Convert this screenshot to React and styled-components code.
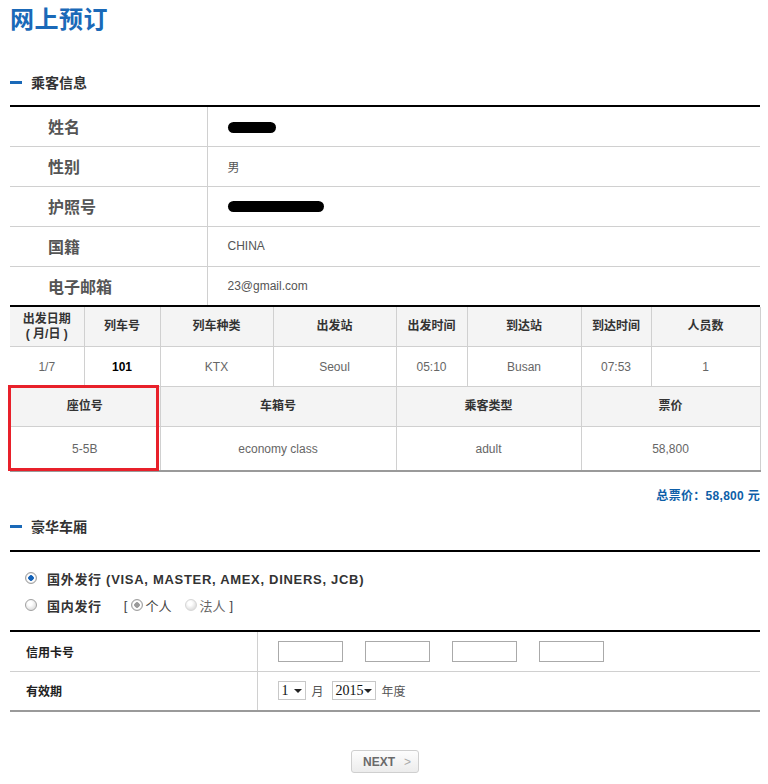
import React from 'react'
import styled, { createGlobalStyle } from 'styled-components'

const GlobalStyle = createGlobalStyle`
  body {
    margin: 0;
    background: #fff;
    font-family: "Liberation Sans", "Noto Sans CJK SC", sans-serif;
    color: #555;
  }
`

const Page = styled.div`
  width: 750px;
  padding: 0 8px 12px 10px;
`

const Title = styled.h1`
  margin: 0;
  padding-top: 4px;
  height: 32px;
  font-size: 24px;
  line-height: 32px;
  font-weight: 700;
  color: #1a69b8;
  letter-spacing: 0.5px;
`

const SectionHead = styled.h2`
  display: flex;
  align-items: center;
  gap: 9px;
  margin: 0;
  height: ${({ h }) => h}px;
  padding-top: ${({ top }) => top}px;
  padding-bottom: ${({ bottom }) => bottom}px;
  box-sizing: content-box;
  font-size: 14px;
  font-weight: 700;
  color: #333;

  &::before {
    content: '';
    width: 12px;
    height: 3px;
    background: #1a69b8;
  }
`

const InfoTable = styled.table`
  width: 750px;
  border-collapse: collapse;
  table-layout: fixed;
  border-top: 2px solid #000;
  border-bottom: 2px solid #000;
`

const InfoRow = styled.tr`
  height: 40px;
  & + & {
    border-top: 1px solid #d0d0d0;
  }
`

const InfoLabel = styled.th`
  padding: 0 0 0 38px;
  text-align: left;
  font-size: 16px;
  font-weight: 700;
  color: #555;
  border-right: 1px solid #d0d0d0;
`

const InfoValue = styled.td`
  padding: 0 0 0 20px;
  font-size: 12px;
  color: #555;
`

const Blot = styled.span`
  display: inline-block;
  vertical-align: middle;
  width: ${({ w }) => w}px;
  height: 11px;
  background: #000;
  border-radius: 6px;
`

const Grid = styled.table`
  width: 750px;
  border-collapse: collapse;
  table-layout: fixed;
  border-bottom: ${({ last }) => (last ? '2px solid #9a9a9a' : 'none')};
`

const HeadCell = styled.th`
  height: 39px;
  padding: 0;
  background: #f4f4f4;
  font-size: 12px;
  line-height: 15px;
  font-weight: 700;
  color: #333;
  text-align: center;
  border: 1px solid #d0d0d0;
  border-top: ${({ ruled }) => (ruled ? '1px solid #d0d0d0' : 'none')};
  &:first-child { border-left: none; }
`

const DataCell = styled.td`
  height: ${({ h }) => h || 39}px;
  padding: 0;
  font-size: 12px;
  color: ${({ strong }) => (strong ? '#000' : '#666')};
  font-weight: ${({ strong }) => (strong ? 700 : 400)};
  text-align: center;
  border: 1px solid #d0d0d0;
  border-bottom: none;
  &:first-child { border-left: none; }
`

const SeatWrap = styled.div`
  position: relative;
`

const Highlight = styled.div`
  position: absolute;
  left: -2px;
  top: -1px;
  width: 145px;
  height: 80px;
  border: 3px solid #e8202a;
  pointer-events: none;
`

const Total = styled.div`
  margin-top: 17px;
  text-align: right;
  font-size: 12px;
  line-height: 14px;
  font-weight: 700;
  color: #0e5fa8;
  letter-spacing: 0.3px;
`

const Rule = styled.div`
  height: 2px;
  background: #000;
`

const Options = styled.div`
  display: flex;
  flex-direction: column;
  gap: 11px;
  padding: 18px 0 17px 15px;
`

const OptionRow = styled.div`
  display: flex;
  align-items: center;
  height: 16px;
  font-size: 13px;
  color: #333;
`

const Radio = styled.span`
  display: inline-block;
  box-sizing: border-box;
  width: 12px;
  height: 12px;
  border-radius: 50%;
  border: 1px solid ${({ faint }) => (faint ? '#d6d6d6' : '#a0a0a0')};
  background: ${({ checked, tone }) =>
    checked
      ? `radial-gradient(circle, ${tone === 'gray' ? '#9a9a9a' : '#1261b8'} 0 2.5px, #fff 3px 4px, #d8d8d8 5px)`
      : 'radial-gradient(circle at 40% 35%, #fff 0 2px, #e2e2e2 6px)'};
  margin-right: ${({ mr }) => mr}px;
  flex: none;
`

const OptLabel = styled.span`
  font-weight: 700;
  letter-spacing: 0.7px;
`

const SubGroup = styled.span`
  display: flex;
  align-items: center;
  margin-left: 22px;
  font-size: 13px;
  color: #444;
`

const Sub = styled.span`
  display: flex;
  align-items: center;
  margin-left: ${({ ml }) => ml}px;
  color: ${({ faint }) => (faint ? '#666' : '#444')};
`

const FormTable = styled.table`
  width: 750px;
  border-collapse: collapse;
  table-layout: fixed;
  border-top: 2px solid #000;
  border-bottom: 2px solid #9a9a9a;
`

const FormRow = styled.tr`
  height: 40px;
  & + & {
    border-top: 1px solid #d0d0d0;
  }
`

const FormLabel = styled.th`
  padding: 0 0 0 16px;
  text-align: left;
  font-size: 12px;
  font-weight: 700;
  color: #222;
  border-right: 1px solid #d0d0d0;
`

const FormValue = styled.td`
  padding: 0 0 0 20px;
`

const Inline = styled.div`
  display: flex;
  align-items: center;
  gap: ${({ gap }) => gap}px;
`

const CardInput = styled.input`
  box-sizing: border-box;
  width: 65px;
  height: 21px;
  border: 1px solid #aaa;
  padding: 0 3px;
  margin: 0;
`

const Select = styled.div`
  display: flex;
  align-items: center;
  justify-content: space-between;
  box-sizing: border-box;
  width: ${({ w }) => w}px;
  height: 19px;
  padding: 0 3px 0 3px;
  border: 1px solid #c8c8c8;
  font-family: "Liberation Serif", serif;
  font-size: 14px;
  color: #111;

  &::after {
    content: '';
    border-left: 4px solid transparent;
    border-right: 4px solid transparent;
    border-top: 4px solid #222;
  }
`

const Unit = styled.span`
  font-size: 12px;
  color: #555;
  margin: 0 8px 0 6px;
`

const Actions = styled.div`
  display: flex;
  justify-content: center;
  padding: 38px 0 0 0;
`

const NextButton = styled.button`
  display: flex;
  align-items: center;
  justify-content: center;
  gap: 9px;
  box-sizing: border-box;
  width: 68px;
  height: 23px;
  padding: 0 0 0 4px;
  border: 1px solid #cfcfcf;
  border-radius: 3px;
  background: linear-gradient(#fdfdfd, #ececec);
  font-family: "Liberation Sans", sans-serif;
  font-size: 12px;
  font-weight: 700;
  color: #6a6a6a;
  cursor: pointer;

  span {
    font-weight: 400;
    color: #aaa;
  }
`

const passenger = [
  ['姓名', <Blot w={48} />],
  ['性别', '男'],
  ['护照号', <Blot w={96} />],
  ['国籍', 'CHINA'],
  ['电子邮箱', '23@gmail.com'],
]

const trainCols = [74, 76, 113, 123, 71, 114, 70, 109]
const trainHead = [
  <>出发日期<br />( 月/日 )</>,
  '列车号',
  '列车种类',
  '出发站',
  '出发时间',
  '到达站',
  '到达时间',
  '人员数',
]
const trainData = ['1/7', '101', 'KTX', 'Seoul', '05:10', 'Busan', '07:53', '1']

const seatCols = [150, 236, 185, 179]
const seatHead = ['座位号', '车箱号', '乘客类型', '票价']
const seatData = ['5-5B', 'economy class', 'adult', '58,800']

const Cols = ({ widths }) => (
  <colgroup>
    {widths.map((w, i) => <col key={i} style={{ width: w }} />)}
  </colgroup>
)

const App = () => {
  return (
    <Page>
      <GlobalStyle />
      <Title>网上预订</Title>

      <SectionHead top={31} h={30} bottom={8}>乘客信息</SectionHead>
      <InfoTable>
        <Cols widths={[197, 553]} />
        <tbody>
          {passenger.map(([label, value]) => (
            <InfoRow key={label}>
              <InfoLabel>{label}</InfoLabel>
              <InfoValue>{value}</InfoValue>
            </InfoRow>
          ))}
        </tbody>
      </InfoTable>

      <Grid>
        <Cols widths={trainCols} />
        <tbody>
          <tr>
            {trainHead.map((h, i) => <HeadCell key={i}>{h}</HeadCell>)}
          </tr>
          <tr>
            {trainData.map((d, i) => (
              <DataCell key={i} strong={i === 1}>{d}</DataCell>
            ))}
          </tr>
        </tbody>
      </Grid>

      <SeatWrap>
        <Grid last>
          <Cols widths={seatCols} />
          <tbody>
            <tr>
              {seatHead.map((h) => <HeadCell key={h} ruled>{h}</HeadCell>)}
            </tr>
            <tr>
              {seatData.map((d) => <DataCell key={d} h={43}>{d}</DataCell>)}
            </tr>
          </tbody>
        </Grid>
        <Highlight />
      </SeatWrap>

      <Total>总票价：58,800 元</Total>

      <SectionHead top={8} h={30} bottom={9}>豪华车厢</SectionHead>
      <Rule />

      <Options>
        <OptionRow>
          <Radio checked mr={10} />
          <OptLabel>国外发行 (VISA, MASTER, AMEX, DINERS, JCB)</OptLabel>
        </OptionRow>
        <OptionRow>
          <Radio mr={10} />
          <OptLabel>国内发行</OptLabel>
          <SubGroup>
            [
            <Sub ml={4}><Radio checked tone="gray" mr={2} />个人</Sub>
            <Sub ml={14} faint><Radio faint mr={2} />法人</Sub>
            <Sub ml={4}>]</Sub>
          </SubGroup>
        </OptionRow>
      </Options>

      <FormTable>
        <Cols widths={[247, 503]} />
        <tbody>
          <FormRow>
            <FormLabel>信用卡号</FormLabel>
            <FormValue>
              <Inline gap={22}>
                <CardInput />
                <CardInput />
                <CardInput />
                <CardInput />
              </Inline>
            </FormValue>
          </FormRow>
          <FormRow>
            <FormLabel>有效期</FormLabel>
            <FormValue>
              <Inline gap={0}>
                <Select w={28}>1</Select>
                <Unit>月</Unit>
                <Select w={44}>2015</Select>
                <Unit>年度</Unit>
              </Inline>
            </FormValue>
          </FormRow>
        </tbody>
      </FormTable>

      <Actions>
        <NextButton type="button">
          NEXT <span>&gt;</span>
        </NextButton>
      </Actions>
    </Page>
  )
}

export default App
